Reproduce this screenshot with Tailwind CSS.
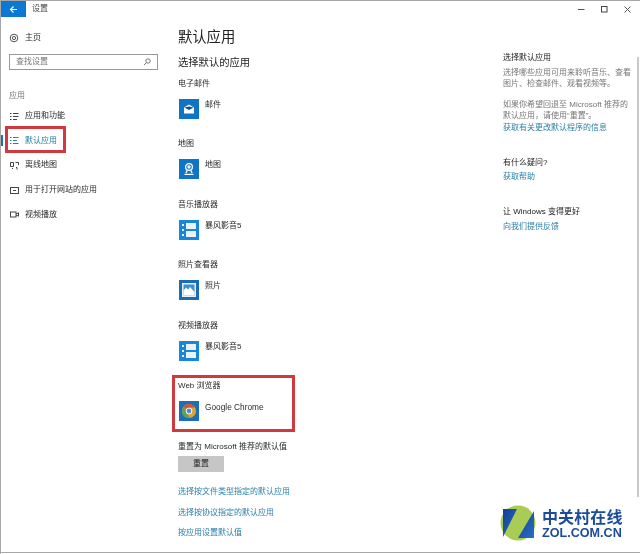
<!doctype html>
<html lang="zh-CN">
  <head>
    <meta charset="utf-8" />
    <script src="https://cdn.jsdelivr.net/npm/@tailwindcss/browser@4"></script>
    <title>设置</title>
  </head>
  <body class="bg-white">
    <div class="relative w-[640px] h-[554px] overflow-hidden bg-white border-t border-l border-[#a8a8a8] font-['Liberation_Sans','Noto_Sans_CJK_SC',sans-serif] text-[8px] leading-[12px] text-[#2a2a2a] blur-[0.35px]">
      <!-- title bar -->
      <header class="flex items-center h-[16px]">
        <button class="flex items-center justify-center w-[25px] h-[16px] bg-[#0d78d4]">
          <svg width="9" height="9" viewBox="0 0 9 9" fill="none" stroke="#fff" stroke-width="1.2"><path d="M8 4.5H1.5M4.5 1.5l-3 3 3 3" /></svg>
        </button>
        <span class="ml-[6px] text-[#444]">设置</span>
        <div class="ml-auto flex items-center gap-[16px] pr-[9px]">
          <svg width="7" height="7" viewBox="0 0 7 7" stroke="#555" fill="none"><path d="M0 3.5h6.5" /></svg>
          <svg width="7" height="7" viewBox="0 0 7 7" stroke="#444" fill="none"><rect x="0.5" y="0.5" width="5.5" height="5.5" /></svg>
          <svg width="7" height="7" viewBox="0 0 7 7" stroke="#555" fill="none"><path d="M0.5 0.5l6 6M6.5 0.5l-6 6" /></svg>
        </div>
      </header>

      <div class="flex">
        <!-- sidebar -->
        <aside class="w-[177px] shrink-0 pl-[8px] pr-[12px]">
          <div class="flex items-center h-[12px] mt-[15px] gap-[6px]">
            <svg width="10" height="10" viewBox="0 0 10 10" fill="none" stroke="#555"><circle cx="5" cy="5" r="3.8" /><circle cx="5" cy="5" r="1.6" /></svg>
            <span>主页</span>
          </div>
          <div class="flex items-center justify-between h-[16px] mt-[10px] w-[149px] px-[6px] border border-[#999] text-[#777]">
            <span>查找设置</span>
            <svg width="8" height="8" viewBox="0 0 8 8" fill="none" stroke="#777"><circle cx="5" cy="3" r="2.2" /><path d="M3.4 4.6L1 7" /></svg>
          </div>
          <div class="mt-[20px] text-[#777]">应用</div>
          <nav class="mt-[8px] flex flex-col gap-[12.7px]">
            <a class="flex items-center gap-[6px] h-[12px] pl-[1px]">
              <svg width="9" height="9" viewBox="0 0 9 9" stroke="#444" fill="none"><path d="M0 1.5h1.5M0 4.5h1.5M0 7.5h1.5M3 1.5h5.5M3 4.5h5.5M3 7.5h4" /></svg>
              <span>应用和功能</span>
            </a>
            <a class="flex items-center gap-[6px] h-[12px] pl-[1px] text-[#1a7f9c]">
              <svg width="9" height="9" viewBox="0 0 9 9" stroke="#2a7f9c" fill="none"><path d="M0 1.5h1.5M0 4.5h1.5M0 7.5h1.5M3 1.5h5.5M3 4.5h4M3 7.5h5.5" /></svg>
              <span>默认应用</span>
            </a>
            <a class="flex items-center gap-[6px] h-[12px] pl-[1px]">
              <svg width="9" height="9" viewBox="0 0 9 9" stroke="#444" fill="none"><path d="M0.5 1.5h3v4h-3zM5.5 1.5h3v2.5M2 7.5h1M6 6.5h1v2" /></svg>
              <span>离线地图</span>
            </a>
            <a class="flex items-center gap-[6px] h-[12px] pl-[1px]">
              <svg width="9" height="9" viewBox="0 0 9 9" stroke="#444" fill="none"><rect x="0.5" y="1.5" width="8" height="6" /><path d="M3 4.5h3" /></svg>
              <span>用于打开网站的应用</span>
            </a>
            <a class="flex items-center gap-[6px] h-[12px] pl-[1px]">
              <svg width="9" height="9" viewBox="0 0 9 9" stroke="#444" fill="none"><rect x="0.5" y="2" width="5.5" height="5" /><path d="M6 4l2.5-1.2v3.4L6 5" /></svg>
              <span>视频播放</span>
            </a>
          </nav>
        </aside>

        <!-- main column -->
        <main class="w-[325px] shrink-0">
          <h1 class="mt-[9px] text-[14.3px] leading-[22px] text-[#222]">默认应用</h1>
          <h2 class="mt-[7.5px] text-[10.3px] leading-[14px] text-[#222]">选择默认的应用</h2>

          <section class="mt-[8px] h-[60.5px]">
            <div>电子邮件</div>
            <div class="flex gap-[6px] mt-[9px] pl-[1px]">
              <div class="flex items-center justify-center w-[20px] h-[20px] bg-[#0f74c4]">
                <svg width="12" height="12" viewBox="0 0 12 12"><path d="M1 4.5L6 1.5l5 3v6H1z" fill="#fff" /><path d="M1.5 4.6L6 7l4.5-2.4L6 3.4z" fill="#0f4f8c" /></svg>
              </div>
              <span>邮件</span>
            </div>
          </section>
          <section class="h-[60.5px]">
            <div>地图</div>
            <div class="flex gap-[6px] mt-[9px] pl-[1px]">
              <div class="flex items-center justify-center w-[20px] h-[20px] bg-[#0f74c4]">
                <svg width="14" height="14" viewBox="0 0 14 14" fill="none" stroke="#fff" stroke-width="1.3"><circle cx="7" cy="5" r="3.4" /><circle cx="7" cy="5" r="1" /><path d="M2.5 12.3h9M5 8.5L4 11M9 8.5l1 2.5" /></svg>
              </div>
              <span>地图</span>
            </div>
          </section>
          <section class="h-[60.5px]">
            <div>音乐播放器</div>
            <div class="flex gap-[6px] mt-[9px] pl-[1px]">
              <div class="flex items-center justify-center w-[20px] h-[20px] bg-[#1a86d8]">
                <svg width="14" height="14" viewBox="0 0 14 14" fill="#fff"><path d="M0 1h2v2H0zM0 6h2v2H0zM0 11h2v2H0zM4 0h10v6H4zM4 8h10v6H4z" opacity="0.9" /></svg>
              </div>
              <span>暴风影音5</span>
            </div>
          </section>
          <section class="h-[60.5px]">
            <div>照片查看器</div>
            <div class="flex gap-[6px] mt-[9px] pl-[1px]">
              <div class="flex items-center justify-center w-[20px] h-[20px] bg-[#1a6db5]">
                <svg width="14" height="14" viewBox="0 0 14 14"><rect x="0.75" y="0.75" width="12.5" height="12.5" fill="#3b8fd4" stroke="#e8f2fa" stroke-width="1.5" /><path d="M1.5 12.5V7.5l2.5-3 2 2 2-2.5 4.5 5v3.5z" fill="#fff" /></svg>
              </div>
              <span>照片</span>
            </div>
          </section>
          <section class="h-[60.5px]">
            <div>视频播放器</div>
            <div class="flex gap-[6px] mt-[9px] pl-[1px]">
              <div class="flex items-center justify-center w-[20px] h-[20px] bg-[#1a86d8]">
                <svg width="14" height="14" viewBox="0 0 14 14" fill="#fff"><path d="M0 1h2v2H0zM0 6h2v2H0zM0 11h2v2H0zM4 0h10v6H4zM4 8h10v6H4z" opacity="0.9" /></svg>
              </div>
              <span>暴风影音5</span>
            </div>
          </section>
          <section class="h-[60.5px]">
            <div>Web 浏览器</div>
            <div class="flex gap-[6px] mt-[9px] pl-[1px]">
              <div class="flex items-center justify-center w-[20px] h-[20px] bg-[#1d6fb5]">
                <svg width="16" height="16" viewBox="0 0 16 16">
                  <circle cx="8" cy="8" r="7" fill="#d9a63a" />
                  <path d="M8 1a7 7 0 0 1 6.1 3.5H8a3.5 3.5 0 0 0-3.2 2L2.6 3.6A7 7 0 0 1 8 1z" fill="#d2503f" />
                  <path d="M2.6 3.6l3 5.2L8.6 15A7 7 0 0 1 2.6 3.6z" fill="#5ba25b" />
                  <circle cx="8" cy="8" r="3.2" fill="#fff" />
                  <circle cx="8" cy="8" r="2.4" fill="#5a88c8" />
                </svg>
              </div>
              <span class="text-[8.3px]">Google Chrome</span>
            </div>
          </section>

          <div>重置为 Microsoft 推荐的默认值</div>
          <button class="block mt-[3px] w-[46px] h-[16px] bg-[#c6c6c6] text-[#222] text-center">重置</button>
          <div class="mt-[14.5px] flex flex-col gap-[8.5px] text-[#2b7fa8]">
            <a>选择按文件类型指定的默认应用</a>
            <a>选择按协议指定的默认应用</a>
            <a>按应用设置默认值</a>
          </div>
        </main>

        <!-- right column -->
        <aside class="w-[130px] shrink-0 pt-[35px] leading-[11.5px]">
          <h3 class="text-[#222]">选择默认应用</h3>
          <p class="mt-[3px] text-[#777]">选择哪些应用可用来聆听音乐、查看图片、检查邮件、观看视频等。</p>
          <p class="mt-[9px] text-[#777]">如果你希望回退至 Microsoft 推荐的默认应用，请使用“重置”。</p>
          <a class="block mt-[0px] text-[#2b7fa8]">获取有关更改默认程序的信息</a>
          <h3 class="mt-[24px] text-[#222]">有什么疑问?</h3>
          <a class="block mt-[2.5px] text-[#2b7fa8]">获取帮助</a>
          <h3 class="mt-[23.5px] text-[#222]">让 Windows 变得更好</h3>
          <a class="block mt-[3px] text-[#2b7fa8]">向我们提供反馈</a>
        </aside>
      </div>

      <!-- selected nav marker, annotations -->
      <div class="absolute left-[0px] top-[134px] w-[2px] h-[11px] bg-[#1a6fb5]"></div>
      <div class="absolute left-[4px] top-[125px] w-[61px] h-[27px] border-[3px] border-[#cf3a3f]"></div>
      <div class="absolute left-[171px] top-[374px] w-[123px] h-[57px] border-[3px] border-[#cf3a3f]"></div>
      <div class="absolute left-[636px] top-[56px] w-[2px] h-[440px] bg-[#c9c9c9]"></div>
      <div class="absolute left-0 bottom-[1px] w-full h-[1px] bg-[#a8a8a8]"></div>

      <!-- watermark -->
      <div class="absolute left-[499px] top-[504px] flex items-center gap-[6px]">
        <svg width="36" height="36" viewBox="0 0 36 36">
          <defs>
            <linearGradient id="zolBlue" x1="0" y1="0" x2="1" y2="1"><stop offset="0" stop-color="#123f96" /><stop offset="1" stop-color="#2a6ec0" /></linearGradient>
          </defs>
          <circle cx="18" cy="18" r="17.5" fill="#a9cc55" />
          <path d="M3 4h14L3 32z" fill="url(#zolBlue)" />
          <path d="M34 6v27H18z" fill="url(#zolBlue)" />
        </svg>
        <div class="pt-[2px] font-bold text-[#1b4b9c]">
          <div class="text-[16px] leading-[18px] tracking-[0.1px]">中关村在线</div>
          <div class="text-[12.6px] leading-[13px] font-['Liberation_Sans',sans-serif]">ZOL.COM.CN</div>
        </div>
      </div>
    </div>
  </body>
</html>
